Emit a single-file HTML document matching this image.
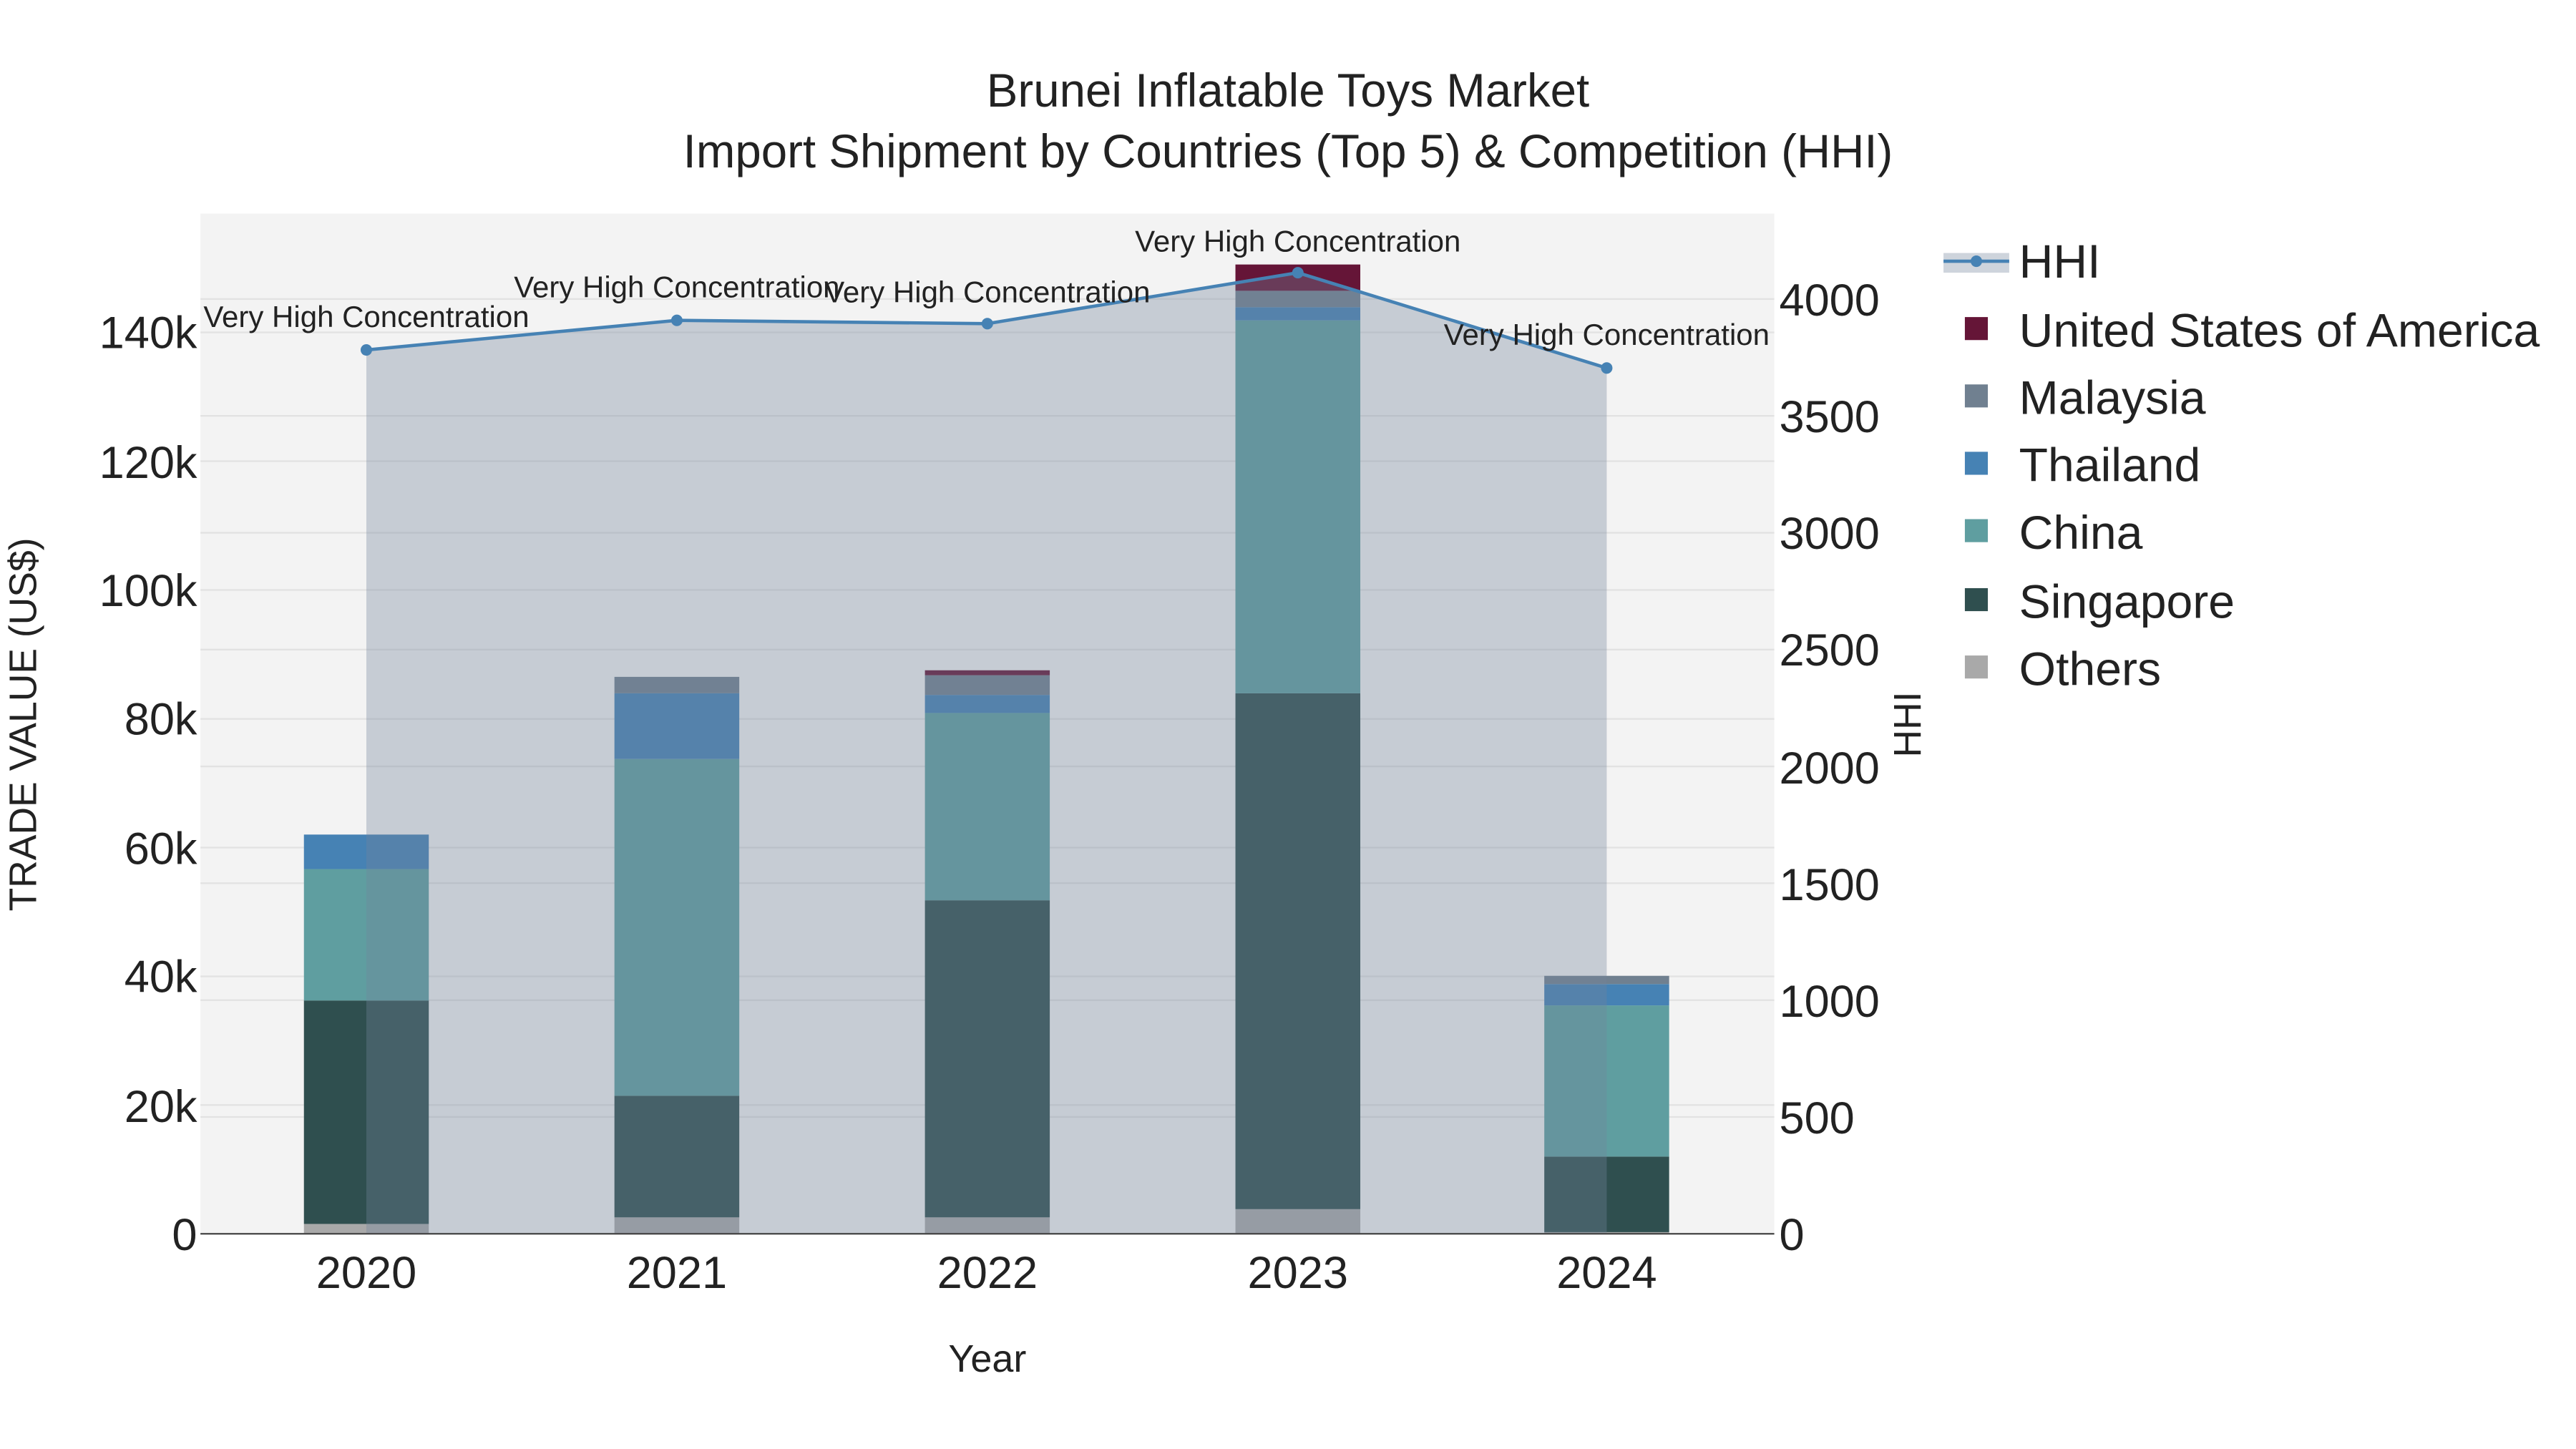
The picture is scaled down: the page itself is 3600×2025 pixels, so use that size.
<!DOCTYPE html>
<html><head><meta charset="utf-8"><style>
html,body{margin:0;padding:0;background:#fff;}
svg{display:block;}
text{font-family:"Liberation Sans",Arial,sans-serif;fill:#222;}
</style></head><body>
<svg width="3600" height="2025" viewBox="0 0 1568 882" xmlns="http://www.w3.org/2000/svg">
<rect x="0" y="0" width="1568" height="882" fill="#fff"/>
<rect x="122" y="130" width="958" height="621" fill="#f3f3f3"/>
<g stroke="#e2e2e2" stroke-width="1">
<line x1="122" x2="1080" y1="672.6" y2="672.6"/><line x1="122" x2="1080" y1="594.3" y2="594.3"/>
<line x1="122" x2="1080" y1="515.9" y2="515.9"/><line x1="122" x2="1080" y1="437.6" y2="437.6"/>
<line x1="122" x2="1080" y1="359.1" y2="359.1"/><line x1="122" x2="1080" y1="280.7" y2="280.7"/>
<line x1="122" x2="1080" y1="202.3" y2="202.3"/>
<line x1="122" x2="1080" y1="679.9" y2="679.9"/><line x1="122" x2="1080" y1="608.8" y2="608.8"/>
<line x1="122" x2="1080" y1="537.6" y2="537.6"/><line x1="122" x2="1080" y1="466.5" y2="466.5"/>
<line x1="122" x2="1080" y1="395.4" y2="395.4"/><line x1="122" x2="1080" y1="324.3" y2="324.3"/>
<line x1="122" x2="1080" y1="253.1" y2="253.1"/><line x1="122" x2="1080" y1="182" y2="182"/>
</g>
<g>
<rect x="185" y="745" width="76" height="6" fill="#a9a9a9"/>
<rect x="185" y="609" width="76" height="136" fill="#2f4f4f"/>
<rect x="185" y="529" width="76" height="80" fill="#5f9ea0"/>
<rect x="185" y="508" width="76" height="21" fill="#4682b4"/>

<rect x="374" y="741" width="76" height="10" fill="#a9a9a9"/>
<rect x="374" y="667" width="76" height="74" fill="#2f4f4f"/>
<rect x="374" y="462" width="76" height="205" fill="#5f9ea0"/>
<rect x="374" y="422" width="76" height="40" fill="#4682b4"/>
<rect x="374" y="412" width="76" height="10" fill="#708090"/>

<rect x="563" y="741" width="76" height="10" fill="#a9a9a9"/>
<rect x="563" y="548" width="76" height="193" fill="#2f4f4f"/>
<rect x="563" y="434" width="76" height="114" fill="#5f9ea0"/>
<rect x="563" y="423" width="76" height="11" fill="#4682b4"/>
<rect x="563" y="411" width="76" height="12" fill="#708090"/>
<rect x="563" y="408" width="76" height="3" fill="#651537"/>

<rect x="752" y="736" width="76" height="15" fill="#a9a9a9"/>
<rect x="752" y="422" width="76" height="314" fill="#2f4f4f"/>
<rect x="752" y="195" width="76" height="227" fill="#5f9ea0"/>
<rect x="752" y="187" width="76" height="8" fill="#4682b4"/>
<rect x="752" y="177" width="76" height="10" fill="#708090"/>
<rect x="752" y="161" width="76" height="16" fill="#651537"/>

<rect x="940" y="750" width="76" height="1" fill="#a9a9a9"/>
<rect x="940" y="704" width="76" height="46" fill="#2f4f4f"/>
<rect x="940" y="612" width="76" height="92" fill="#5f9ea0"/>
<rect x="940" y="599" width="76" height="13" fill="#4682b4"/>
<rect x="940" y="594" width="76" height="5" fill="#708090"/>
</g>
<polygon points="223,213 412,195 601,197 790,166 978,224 978,751 223,751" fill="rgba(116,131,154,0.35)"/>
<polyline points="223,213 412,195 601,197 790,166 978,224" fill="none" stroke="#4682b4" stroke-width="2"/>
<g fill="#4682b4"><circle cx="223" cy="213" r="3.5"/><circle cx="412" cy="195" r="3.5"/><circle cx="601" cy="197" r="3.5"/><circle cx="790" cy="166" r="3.5"/><circle cx="978" cy="224" r="3.5"/></g>
<line x1="122" x2="1080" y1="751" y2="751" stroke="#444" stroke-width="1"/>
<g font-size="18.3" text-anchor="middle">
<text x="223" y="199">Very High Concentration</text>
<text x="412" y="181">Very High Concentration</text>
<text x="601" y="184">Very High Concentration</text>
<text x="790" y="153">Very High Concentration</text>
<text x="978" y="210">Very High Concentration</text>
</g>
<g text-anchor="middle" font-size="28.5">
<text x="784" y="65">Brunei Inflatable Toys Market</text>
<text x="784" y="102">Import Shipment by Countries (Top 5) &amp; Competition (HHI)</text>
</g>
<g font-size="27.5" text-anchor="end">
<text x="120" y="761">0</text><text x="120" y="683">20k</text><text x="120" y="604">40k</text>
<text x="120" y="526">60k</text><text x="120" y="447">80k</text><text x="120" y="369">100k</text>
<text x="120" y="291">120k</text><text x="120" y="212">140k</text>
</g>
<g font-size="27.5" text-anchor="start">
<text x="1083" y="761">0</text><text x="1083" y="690">500</text><text x="1083" y="619">1000</text>
<text x="1083" y="548">1500</text><text x="1083" y="477">2000</text><text x="1083" y="405">2500</text>
<text x="1083" y="334">3000</text><text x="1083" y="263">3500</text><text x="1083" y="192">4000</text>
</g>
<g font-size="27.5" text-anchor="middle">
<text x="223" y="784">2020</text><text x="412" y="784">2021</text><text x="601" y="784">2022</text>
<text x="790" y="784">2023</text><text x="978" y="784">2024</text>
</g>
<text x="601" y="835" font-size="23.5" text-anchor="middle">Year</text>
<text transform="translate(22,441) rotate(-90)" font-size="23.3" text-anchor="middle">TRADE VALUE (US$)</text>
<text transform="translate(1169,441) rotate(-90)" font-size="23.3" text-anchor="middle">HHI</text>
<rect x="1183" y="154" width="40" height="12" fill="rgba(116,131,154,0.35)"/>
<line x1="1183" x2="1223" y1="159" y2="159" stroke="#4682b4" stroke-width="2"/>
<circle cx="1203" cy="159" r="3.5" fill="#4682b4"/>
<g font-size="28.8">
<text x="1229" y="169">HHI</text>
<rect x="1196" y="193" width="14" height="14" fill="#651537"/><text x="1229" y="211">United States of America</text>
<rect x="1196" y="234" width="14" height="14" fill="#708090"/><text x="1229" y="252">Malaysia</text>
<rect x="1196" y="275" width="14" height="14" fill="#4682b4"/><text x="1229" y="293">Thailand</text>
<rect x="1196" y="316" width="14" height="14" fill="#5f9ea0"/><text x="1229" y="334">China</text>
<rect x="1196" y="358" width="14" height="14" fill="#2f4f4f"/><text x="1229" y="376">Singapore</text>
<rect x="1196" y="399" width="14" height="14" fill="#a9a9a9"/><text x="1229" y="417">Others</text>
</g>
</svg>
</body></html>
